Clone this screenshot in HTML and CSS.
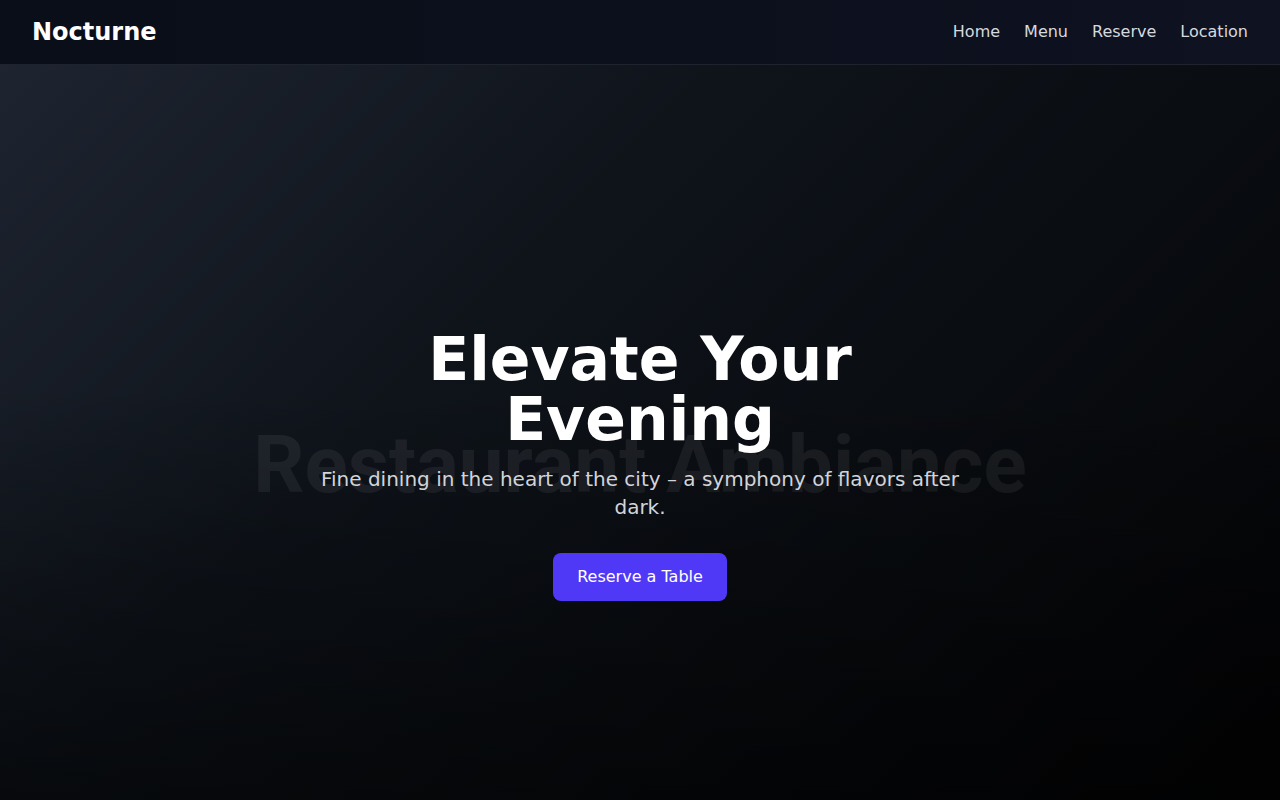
FILE: index.html
```html
<!DOCTYPE html>
<html lang="en">
<head>
<meta charset="utf-8">
<title>Nocturne</title>
<link rel="stylesheet" href="styles.css">
</head>
<body>
<header class="site-header">
  <a class="logo" href="#">Nocturne</a>
  <nav class="nav">
    <a href="#">Home</a>
    <a href="#">Menu</a>
    <a href="#">Reserve</a>
    <a href="#">Location</a>
  </nav>
</header>
<section class="hero">
  <div class="hero-bg"><span class="ghost">Restaurant Ambiance</span></div>
  <div class="hero-content">
    <h1 class="title">Elevate Your Evening</h1>
    <p class="subtitle">Fine dining in the heart of the city – a symphony of flavors after dark.</p>
    <a class="cta" href="#">Reserve a Table</a>
  </div>
</section>
</body>
</html>
```

FILE: styles.css
```css
* { box-sizing: border-box; }
html, body { margin: 0; padding: 0; }
body {
  background: #000;
  color: #fff;
  font-family: "DejaVu Sans", sans-serif;
}
a { text-decoration: none; color: inherit; }

.site-header {
  height: 65px;
  display: flex;
  align-items: center;
  justify-content: space-between;
  padding: 0 32px;
  background: linear-gradient(90deg, #0a0e18, #0e1221);
  border-bottom: 1px solid #1f232d;
}
.logo {
  font-size: 24px;
  font-weight: 700;
  color: #fff;
  line-height: 32px;
}
.nav {
  display: flex;
  gap: 24px;
}
.nav a {
  font-size: 16px;
  line-height: 24px;
  color: #d6d9de;
}

.hero {
  position: relative;
  min-height: 800px;
  display: flex;
  align-items: center;
  justify-content: center;
  background: linear-gradient(135deg, #1e2430 0%, #0f141b 35%, #020203 100%);
  overflow: hidden;
}
.hero::after {
  content: "";
  position: absolute;
  inset: 0;
  background: linear-gradient(to top, rgba(0,0,0,0.6), rgba(0,0,0,0) 60%);
}
.hero-bg {
  position: absolute;
  inset: 0;
  display: flex;
  align-items: center;
  justify-content: center;
}
.ghost {
  font-family: "Roboto", sans-serif;
  font-size: 80px;
  font-weight: 700;
  color: rgba(255,255,255,0.07);
  white-space: nowrap;
}
.hero-content {
  position: relative;
  z-index: 1;
  width: 672px;
  padding: 0 16px;
  text-align: center;
}
.title {
  margin: 0 0 16px;
  font-size: 60px;
  line-height: 60px;
  font-weight: 700;
  color: #fff;
}
.subtitle {
  margin: 0 0 32px;
  font-size: 20px;
  line-height: 28px;
  color: #d1d5db;
}
.cta {
  display: inline-block;
  padding: 12px 24px;
  font-size: 16px;
  line-height: 24px;
  color: #fff;
  background: #4f39f6;
  border-radius: 8px;
}
```
